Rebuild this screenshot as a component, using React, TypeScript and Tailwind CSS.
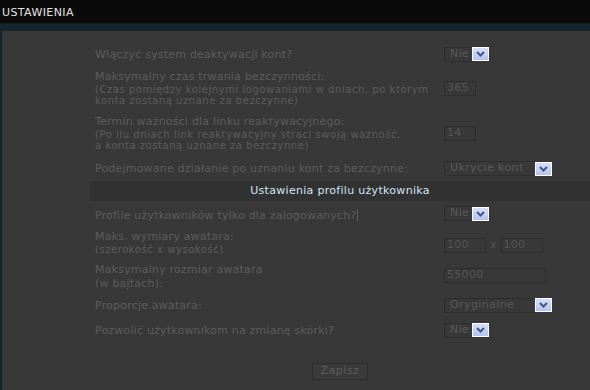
import React from 'react'

const font = { fontFamily: '"DejaVu Sans", Verdana, sans-serif' }

function Arrow() {
  return (
    <span className="flex h-[14px] w-[17px] items-center justify-center border border-white bg-gradient-to-b from-[#d6e0fa] to-[#b2c4f2]">
      <svg width="9" height="6" viewBox="0 0 9 6">
        <path d="M1 1 L4.5 4.5 L8 1" fill="none" stroke="#46557d" strokeWidth="2" />
      </svg>
    </span>
  )
}

function Select({ value, width }: { value: string; width: string }) {
  return (
    <div className="flex items-center">
      <div className={`${width} flex h-[15px] items-center border border-[#2e2e2e] pl-[5px] text-[11px] tracking-[0.4px] text-[#585858]`}>
        {value}
      </div>
      <div className="-ml-px">
        <Arrow />
      </div>
    </div>
  )
}

function Input({ value, width }: { value: string; width: string }) {
  return (
    <div className={`${width} flex h-[15px] items-center border border-[#2e2e2e] pl-[2px] text-[11px] tracking-[0.3px] text-[#555555]`}>
      {value}
    </div>
  )
}

function Label({ main, sub, mt }: { main: React.ReactNode; sub?: string[]; mt: string }) {
  return (
    <div className={`w-[354px] shrink-0 pl-[5px] ${mt}`}>
      <div className="h-[14px] text-[11px] leading-[14px] tracking-[0.2px] text-[#5c5c5c]">{main}</div>
      {sub?.map((s) => (
        <div key={s} className="h-[11px] text-[10px] leading-[11px] tracking-[0.55px] text-[#5c5c5c]">
          {s}
        </div>
      ))}
    </div>
  )
}

export default function App() {
  return (
    <div className="h-[390px] w-[590px] overflow-hidden bg-[#12262b]" style={font}>
      <div className="h-[24px] border-b border-[#1c1c1c] bg-[#0a0a0a]">
        <div className="pl-[2px] pt-[6px] text-[11px] leading-[14px] tracking-[0.4px] text-[#e2e2e2]">USTAWIENIA</div>
      </div>
      <div className="ml-[2px] mt-[7px] h-[400px] bg-[#383838]">
        <div className="ml-[88px] pt-[15px]">
          <div className="flex">
            <Label mt="mt-[2px]" main="Włączyć system deaktywacji kont?" />
            <Select value="Nie" width="w-[29px]" />
          </div>

          <div className="mt-[8px] flex">
            <Label
              mt="mt-0"
              main="Maksymalny czas trwania bezczynności:"
              sub={['(Czas pomiędzy kolejnymi logowaniami w dniach, po którym', 'konta zostaną uznane za bezczynne)']}
            />
            <div className="mt-[11px]">
              <Input value="365" width="w-[32px]" />
            </div>
          </div>

          <div className="mt-[9px] flex">
            <Label
              mt="mt-0"
              main="Termin ważności dla linku reaktywacyjnego:"
              sub={['(Po ilu dniach link reaktywacyjny straci swoją ważność,', 'a konta zostaną uznane za bezczynne)']}
            />
            <div className="mt-[11px]">
              <Input value="14" width="w-[32px]" />
            </div>
          </div>

          <div className="mt-[10px] flex">
            <Label mt="mt-[1px]" main="Podejmowane działanie po uznaniu kont za bezczynne:" />
            <Select value="Ukrycie kont" width="w-[92px]" />
          </div>

          <div className="mt-[5px] flex h-[20px] items-center justify-center bg-[#323232] text-[11px] tracking-[0.3px] text-[#d4e4f4]">
            Ustawienia profilu użytkownika
          </div>

          <div className="mt-[5px] flex">
            <Label
              mt="mt-[1px]"
              main={
                <span>
                  Profile użytkowników tylko dla zalogowanych?
                  <span className="ml-[1px] inline-block h-[12px] w-px translate-y-[2px] bg-[#5c5c5c]" />
                </span>
              }
            />
            <Select value="Nie" width="w-[29px]" />
          </div>

          <div className="mt-[9px] flex">
            <Label mt="mt-0" main="Maks. wymiary awatara:" sub={['(szerokość x wysokość)']} />
            <div className="mt-[6px] flex items-center">
              <Input value="100" width="w-[42px]" />
              <span className="mx-[4px] text-[11px] text-[#555555]">x</span>
              <Input value="100" width="w-[42px]" />
            </div>
          </div>

          <div className="mt-[8px] flex">
            <div className="w-[354px] shrink-0 pl-[5px] text-[11px] leading-[14px] tracking-[0.2px] text-[#5c5c5c]">
              <div>Maksymalny rozmiar awatara</div>
              <div>(w bajtach):</div>
            </div>
            <div className="mt-[5px]">
              <Input value="55000" width="w-[102px]" />
            </div>
          </div>

          <div className="mt-[6px] flex">
            <Label mt="mt-[2px]" main="Proporcje awatara:" />
            <Select value="Oryginalne" width="w-[92px]" />
          </div>

          <div className="mt-[9px] flex">
            <Label mt="mt-[2px]" main="Pozwolić użytkownikom na zmianę skórki?" />
            <Select value="Nie" width="w-[29px]" />
          </div>

          <div className="mt-[25px] flex justify-center">
            <button className="flex h-[17px] w-[56px] items-center justify-center border border-[#2c2c2c] bg-[#3a3a3a] text-[11px] tracking-[0.5px] text-[#5c5c5c]">
              Zapisz
            </button>
          </div>
        </div>
      </div>
    </div>
  )
}
